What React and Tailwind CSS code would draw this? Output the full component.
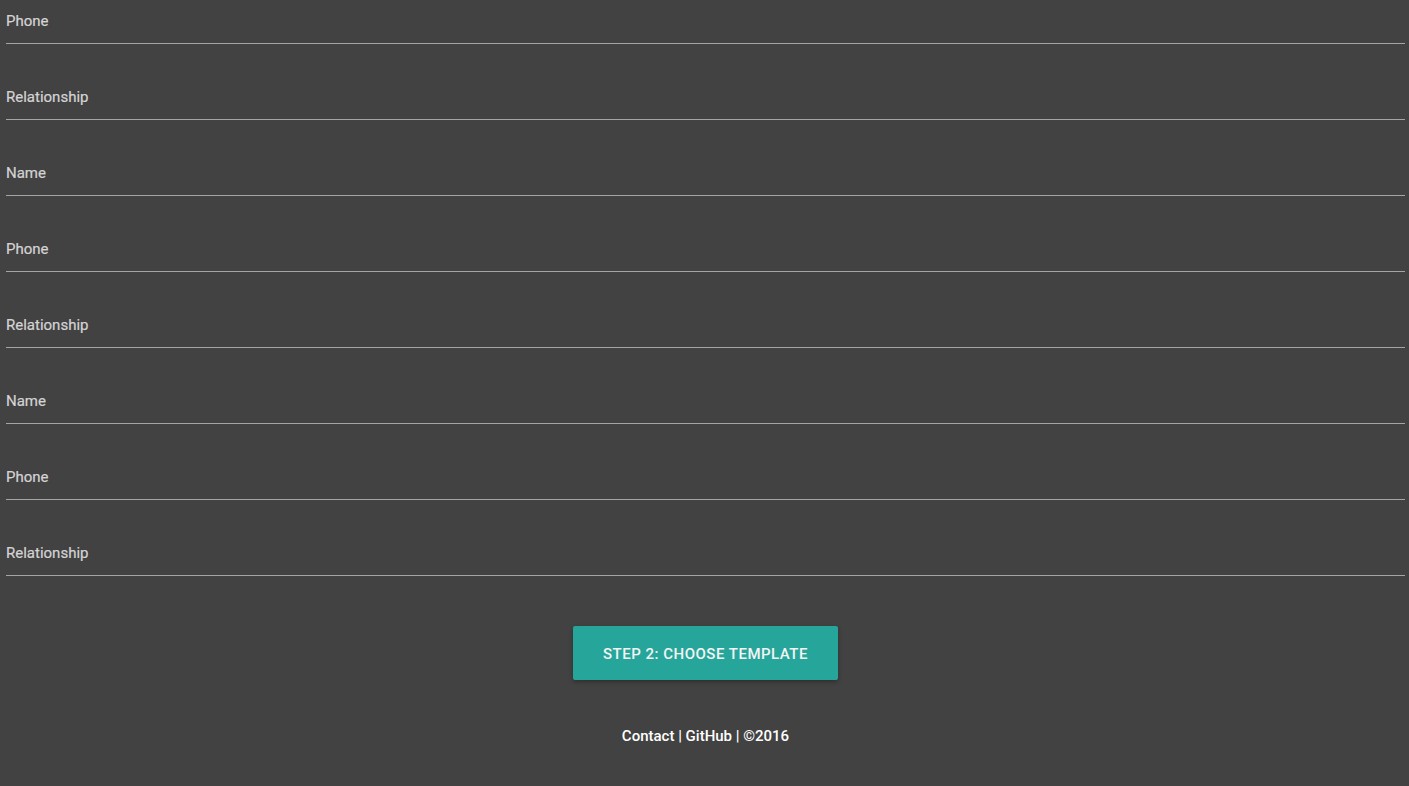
import React from 'react';

const fields = ['Phone', 'Relationship', 'Name', 'Phone', 'Relationship', 'Name', 'Phone', 'Relationship'];

const Field = ({ label, first }) => (
    <div className={`${first ? '' : 'mt-[32px]'} h-[44px] border-b border-[#a5a5a5] pt-[11px]`}>
        <label className="block text-[15px] leading-[20px] text-[#d4d4d4] [-webkit-text-stroke:0.2px_#d4d4d4]">{label}</label>
    </div>
);

export default function App() {
    return (
        <div className="min-h-[786px] bg-[#424242] font-['Roboto',sans-serif]">
            <form className="pl-[6px] pr-[4px]">
                {fields.map((f, i) => (
                    <Field key={i} label={f} first={i === 0} />
                ))}
            </form>

            <div className="flex justify-center pt-[50px] pl-[2px]">
                <button className="h-[54px] w-[265px] rounded-[2px] bg-[#26a69a] pt-[2px] text-[15px] font-medium uppercase tracking-[0.5px] text-[#f4f4f4] shadow-[0_2px_4px_rgba(0,0,0,0.3)]">
                    Step 2: Choose Template
                </button>
            </div>

            <footer className="pt-[46px] pb-[39px] pl-[2px] text-center text-[15px] font-medium leading-[20px] text-white">
                Contact | GitHub | ©2016
            </footer>
        </div>
    );
}
